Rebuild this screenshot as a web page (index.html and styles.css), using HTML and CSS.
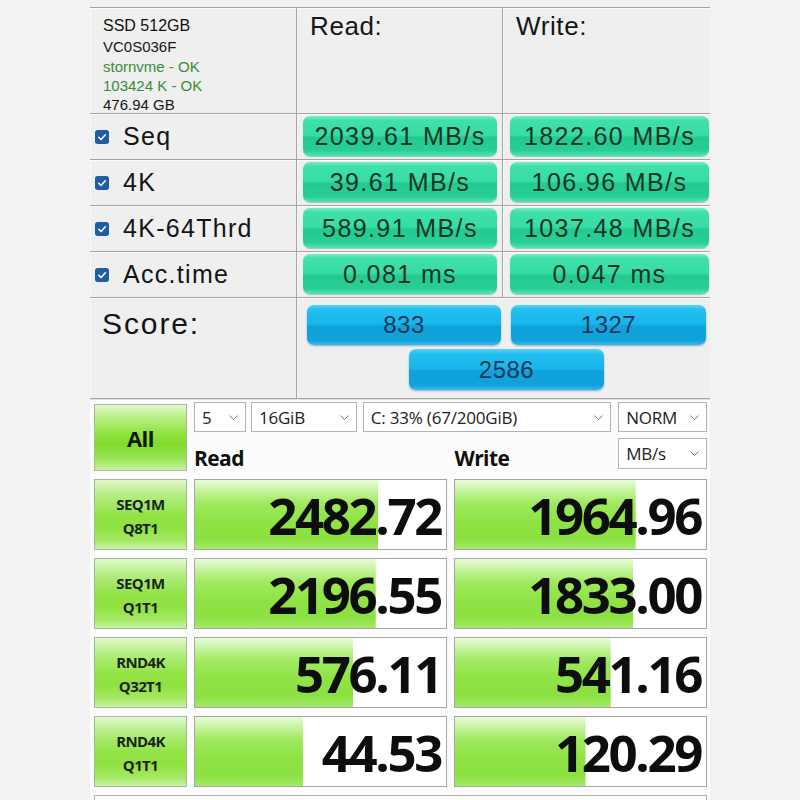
FILE: index.html
```html
<!DOCTYPE html>
<html>
<head>
<meta charset="utf-8">
<link rel="stylesheet" href="styles.css">
</head>
<body>
<div class="page">
  <section class="asssd">
    <div class="cell info">
      <div class="info-title">SSD 512GB</div>
      <div class="info-line">VC0S036F</div>
      <div class="info-line ok">stornvme - OK</div>
      <div class="info-line ok">103424 K - OK</div>
      <div class="info-line">476.94 GB</div>
    </div>
    <div class="cell head">Read:</div>
    <div class="cell head last">Write:</div>

    <div class="cell label"><svg class="chk" viewBox="0 0 13 13"><rect x="0" y="0" width="13" height="13" rx="2.5" fill="#1f5ea6"/><path d="M3.5 6.8 L5.6 8.8 L9.6 4.4" fill="none" stroke="#fff" stroke-width="1.4" stroke-linecap="round" stroke-linejoin="round"/></svg><span>Seq</span></div>
    <div class="cell val"><div class="pill green">2039.61 MB/s</div></div>
    <div class="cell val last"><div class="pill green">1822.60 MB/s</div></div>

    <div class="cell label"><svg class="chk" viewBox="0 0 13 13"><rect x="0" y="0" width="13" height="13" rx="2.5" fill="#1f5ea6"/><path d="M3.5 6.8 L5.6 8.8 L9.6 4.4" fill="none" stroke="#fff" stroke-width="1.4" stroke-linecap="round" stroke-linejoin="round"/></svg><span>4K</span></div>
    <div class="cell val"><div class="pill green">39.61 MB/s</div></div>
    <div class="cell val last"><div class="pill green">106.96 MB/s</div></div>

    <div class="cell label"><svg class="chk" viewBox="0 0 13 13"><rect x="0" y="0" width="13" height="13" rx="2.5" fill="#1f5ea6"/><path d="M3.5 6.8 L5.6 8.8 L9.6 4.4" fill="none" stroke="#fff" stroke-width="1.4" stroke-linecap="round" stroke-linejoin="round"/></svg><span>4K-64Thrd</span></div>
    <div class="cell val"><div class="pill green">589.91 MB/s</div></div>
    <div class="cell val last"><div class="pill green">1037.48 MB/s</div></div>

    <div class="cell label"><svg class="chk" viewBox="0 0 13 13"><rect x="0" y="0" width="13" height="13" rx="2.5" fill="#1f5ea6"/><path d="M3.5 6.8 L5.6 8.8 L9.6 4.4" fill="none" stroke="#fff" stroke-width="1.4" stroke-linecap="round" stroke-linejoin="round"/></svg><span>Acc.time</span></div>
    <div class="cell val"><div class="pill green">0.081 ms</div></div>
    <div class="cell val last"><div class="pill green">0.047 ms</div></div>

    <div class="cell score-label">Score:</div>
    <div class="cell scores">
      <div class="pill blue">833</div>
      <div class="pill blue">1327</div>
      <div class="pill blue total">2586</div>
    </div>
  </section>

  <section class="cdm">
    <div class="all">All</div>
    <div class="controls">
      <div class="selrow">
        <div class="sel s-count"><span>5</span><svg class="chev" viewBox="0 0 9 5"><path d="M0.5 0.5 L4.5 4.5 L8.5 0.5" fill="none" stroke="#777" stroke-width="1"/></svg></div>
        <div class="sel s-size"><span>16GiB</span><svg class="chev" viewBox="0 0 9 5"><path d="M0.5 0.5 L4.5 4.5 L8.5 0.5" fill="none" stroke="#777" stroke-width="1"/></svg></div>
        <div class="sel s-drive"><span>C: 33% (67/200GiB)</span><svg class="chev" viewBox="0 0 9 5"><path d="M0.5 0.5 L4.5 4.5 L8.5 0.5" fill="none" stroke="#777" stroke-width="1"/></svg></div>
        <div class="sel s-mode"><span>NORM</span><svg class="chev" viewBox="0 0 9 5"><path d="M0.5 0.5 L4.5 4.5 L8.5 0.5" fill="none" stroke="#777" stroke-width="1"/></svg></div>
      </div>
      <div class="unitrow">
        <div class="col-title read-title">Read</div>
        <div class="col-title write-title">Write</div>
        <div class="sel s-unit"><span>MB/s</span><svg class="chev" viewBox="0 0 9 5"><path d="M0.5 0.5 L4.5 4.5 L8.5 0.5" fill="none" stroke="#777" stroke-width="1"/></svg></div>
      </div>
    </div>

    <div class="tlabel">SEQ1M<br>Q8T1</div>
    <div class="tval" style="--w:73%">2482.72</div>
    <div class="tval" style="--w:72%">1964.96</div>

    <div class="tlabel">SEQ1M<br>Q1T1</div>
    <div class="tval" style="--w:72%">2196.55</div>
    <div class="tval" style="--w:71%">1833.00</div>

    <div class="tlabel">RND4K<br>Q32T1</div>
    <div class="tval" style="--w:63%">576.11</div>
    <div class="tval" style="--w:62%">541.16</div>

    <div class="tlabel">RND4K<br>Q1T1</div>
    <div class="tval" style="--w:43%">44.53</div>
    <div class="tval" style="--w:52%">120.29</div>

    <div class="comment"></div>
  </section>
</div>
</body>
</html>
```
FILE: styles.css
```css
* { box-sizing: border-box; }
html, body { margin: 0; padding: 0; }
body {
  width: 800px;
  height: 800px;
  overflow: hidden;
  background: #f2f2f2;
  font-family: "Liberation Sans", Arial, sans-serif;
  color: #111;
}
.page {
  width: 620px;
  margin: 0 auto;
  padding-top: 7px;
}

/* ---------- AS SSD part ---------- */
.asssd {
  display: grid;
  grid-template-columns: 207px 206px 207px;
  grid-template-rows: 106px 46px 46px 46px 46px 101px;
  border-top: 1px solid #a4a4a4;
  background: #eeeeee;
}
.cell {
  border-bottom: 1px solid #a4a4a4;
  border-right: 1px solid #a4a4a4;
  box-shadow: inset 0 1px 0 #fafafa, inset 1px 0 0 #f8f8f8;
  background: #efefef;
}
.cell.last { border-right: none; }

.info {
  padding: 7px 0 0 13px;
  font-size: 15px;
  line-height: 20px;
}
.info-title { font-size: 16px; line-height: 21px; margin-bottom: 1px; }
.info-line { color: #161616; }
.info-line.ok { color: #3b8b3b; line-height: 19px; }

.head {
  font-size: 26px;
  letter-spacing: 0.6px;
  padding: 3px 0 0 13px;
  color: #151515;
}

.label {
  display: flex;
  align-items: center;
  padding-left: 5px;
  font-size: 25px;
  letter-spacing: 1.3px;
  color: #141414;
}
.chk { width: 14px; height: 14px; margin-right: 14px; flex: none; }

.val {
  display: flex;
  align-items: center;
  padding: 0 5px 1px 6px;
}
.val.last { padding: 0 1px 1px 7px; }

.pill {
  width: 100%;
  height: 40px;
  border-radius: 7px;
  display: flex;
  align-items: center;
  justify-content: center;
  font-size: 25px;
  letter-spacing: 1.4px;
}
.pill.green {
  color: #173527;
  background: linear-gradient(to bottom, #7cecc6 0%, #3fe1a9 10%, #37dca4 48%, #24c98f 54%, #28cf95 86%, #56e2b2 100%);
  box-shadow: 0 1px 1px rgba(0, 120, 80, 0.35);
}

.score-label {
  font-size: 30px;
  letter-spacing: 1.9px;
  padding: 9px 0 0 12px;
  color: #141414;
}
.scores {
  grid-column: 2 / 4;
  border-right: none;
  display: grid;
  grid-template-columns: 194px 195px;
  column-gap: 10px;
  row-gap: 4px;
  padding: 7px 0 0 10px;
  align-content: start;
}
.pill.blue {
  height: 40px;
  font-size: 24px;
  letter-spacing: 0.5px;
  color: #1c3658;
  background: linear-gradient(to bottom, #5ad3f7 0%, #22bff0 12%, #17b5eb 48%, #0ea1da 54%, #10a2db 88%, #3ab9e8 100%);
  box-shadow: 0 1px 2px rgba(0, 80, 130, 0.4);
}
.pill.total {
  grid-column: 1 / 3;
  justify-self: center;
  width: 195px;
  height: 41px;
}

/* ---------- CrystalDiskMark part ---------- */
.cdm {
  display: grid;
  grid-template-columns: 93px 253px 253px;
  grid-template-rows: 69px 71px 71px 71px 71px 40px;
  column-gap: 7px;
  row-gap: 8px;
  padding: 2px 0 0 4px;
  background: #fcfcfc;
  border-top: 1px solid #e2e2e2;
  font-family: "Open Sans", "Noto Sans", sans-serif;
}
.all {
  margin-top: 2px;
  height: 67px;
  border: 1px solid #a9b7a0;
  background: linear-gradient(to bottom, #e4f9cf 0%, #b9ef88 18%, #8fe23f 45%, #7fdb2b 60%, #99e555 82%, #c7f2a2 100%);
  display: flex;
  align-items: center;
  justify-content: center;
  font-weight: 700;
  font-size: 22px;
  color: #101810;
  letter-spacing: -0.5px;
}
.controls {
  grid-column: 2 / 4;
  display: flex;
  flex-direction: column;
  gap: 6px;
}
.selrow { display: flex; gap: 0; height: 30px; }
.sel {
  height: 30px;
  border: 1px solid #b4b4b4;
  background: #fff;
  display: flex;
  align-items: center;
  justify-content: space-between;
  padding: 0 7px 0 7px;
  font-size: 17px;
  letter-spacing: -0.2px;
  color: #222;
}
.chev { width: 9px; height: 5px; flex: none; }
.s-count { width: 52px; }
.s-size { width: 106px; margin-left: 5px; }
.s-drive { width: 249px; margin-left: 6px; }
.s-mode { width: 89px; margin-left: 7px; }
.unitrow { display: flex; align-items: center; height: 31px; }
.col-title {
  font-weight: 700;
  font-size: 21px;
  color: #111;
  letter-spacing: -0.6px;
  padding-top: 8px;
}
.read-title { width: 261px; }
.write-title { width: 164px; }
.s-unit { width: 89px; height: 31px; }

.tlabel {
  border: 1px solid #a9b3a4;
  background: linear-gradient(to bottom, #e1f8cd 0%, #b4ed82 22%, #94e347 50%, #8fe13f 68%, #a6e964 88%, #c9f3a6 100%);
  display: flex;
  align-items: center;
  justify-content: center;
  text-align: center;
  font-weight: 700;
  font-size: 15px;
  line-height: 24px;
  color: #1b241a;
  letter-spacing: -0.6px;
  padding-top: 2px;
}
.tval {
  border: 1px solid #a6a6a6;
  background-color: #fff;
  background-image: linear-gradient(to bottom, #e9fbdc 0%, #c3f39a 16%, #9fe95e 34%, #8fe345 60%, #8be140 85%, #a5e96a 100%);
  background-size: var(--w) 100%;
  background-repeat: no-repeat;
  display: flex;
  align-items: center;
  justify-content: flex-end;
  padding-right: 5px;
  font-weight: 700;
  font-size: 51px;
  letter-spacing: -2.4px;
  color: #0d0d0d;
  line-height: 1;
  padding-top: 2px;
}
.comment {
  grid-column: 1 / 4;
  border: 1px solid #b0b0b0;
  background: #fff;
}
```
